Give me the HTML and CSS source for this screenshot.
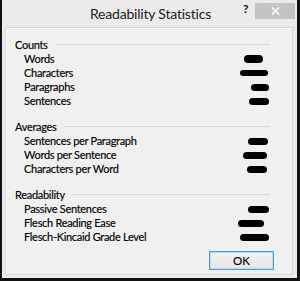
FILE: index.html
```html
<!DOCTYPE html>
<html>
<head>
<meta charset="utf-8">
<link rel="stylesheet" href="styles.css">
</head>
<body>
<div class="frame">
  <div class="window">
    <div class="titlebar">
      <div class="title">Readability Statistics</div>
      <div class="help">?</div>
      <div class="close">
        <svg width="9" height="8" viewBox="0 0 9 8"><path d="M1 0.5 L8 7.5 M8 0.5 L1 7.5" stroke="#fff" stroke-width="1.6"/></svg>
      </div>
    </div>
    <div class="panel">
      <div class="group">
        <div class="ghead"><span>Counts</span></div>
        <div class="row"><span>Words</span><i class="blob" style="width:19px;height:8px;margin-right:6px"></i></div>
        <div class="row"><span>Characters</span><i class="blob" style="width:28px;height:6px;margin-right:1px"></i></div>
        <div class="row"><span>Paragraphs</span><i class="blob" style="width:18px;height:7px;margin-right:0"></i></div>
        <div class="row"><span>Sentences</span><i class="blob" style="width:20px;height:7px;margin-right:0"></i></div>
      </div>
      <div class="group">
        <div class="ghead"><span>Averages</span></div>
        <div class="row"><span>Sentences per Paragraph</span><i class="blob" style="width:20px;height:7px;margin-right:1px"></i></div>
        <div class="row"><span>Words per Sentence</span><i class="blob" style="width:24px;height:7px;margin-right:2px"></i></div>
        <div class="row"><span>Characters per Word</span><i class="blob" style="width:20px;height:7px;margin-right:2px"></i></div>
      </div>
      <div class="group">
        <div class="ghead"><span>Readability</span></div>
        <div class="row"><span>Passive Sentences</span><i class="blob" style="width:21px;height:7px;margin-right:0"></i></div>
        <div class="row"><span>Flesch Reading Ease</span><i class="blob" style="width:26px;height:7px;margin-right:5px"></i></div>
        <div class="row"><span>Flesch-Kincaid Grade Level</span><i class="blob" style="width:29px;height:7px;margin-right:0"></i></div>
      </div>
      <div class="actions">
        <button class="ok">OK</button>
      </div>
    </div>
  </div>
</div>
</body>
</html>
```
FILE: styles.css
```css
html, body {
  margin: 0;
  padding: 0;
}
body {
  width: 300px;
  height: 281px;
  overflow: hidden;
  font-family: Lato, "Open Sans", sans-serif;
}
.frame {
  width: 300px;
  height: 281px;
  box-sizing: border-box;
  background: #111;
  padding: 0 3px 3px 2px;
}
.window {
  height: 278px;
  background: #ebebeb;
  display: flex;
  flex-direction: column;
}
.titlebar {
  height: 27px;
  position: relative;
  flex: none;
}
.title {
  text-align: center;
  font-size: 14px;
  letter-spacing: -0.2px;
  line-height: 27px;
  color: #222;
  padding-left: 2px;
}
.help {
  position: absolute;
  left: 241px;
  top: 2px;
  font-size: 12px;
  font-weight: bold;
  color: #111;
  line-height: 14px;
}
.close {
  position: absolute;
  left: 253px;
  top: 3px;
  width: 40px;
  height: 16px;
  background: #c4c4c4;
  display: flex;
  align-items: center;
  justify-content: center;
}
.panel {
  flex: 1;
  margin: 0 4px 3px 3px;
  background: #f0f0f0;
  border: 1px solid #d9d9d9;
  box-shadow: inset 1px 1px 0 #fafafa;
  padding: 10px 23px 0 9px;
  display: flex;
  flex-direction: column;
  gap: 12px;
  font-size: 11px;
  letter-spacing: -0.3px;
  color: #000;
  -webkit-text-stroke: 0.15px #000;
}
.group {
  display: flex;
  flex-direction: column;
}
.ghead {
  height: 14px;
  line-height: 14px;
  display: flex;
  align-items: center;
  margin-right: -1px;
}
.ghead::after {
  content: "";
  flex: 1;
  height: 1px;
  background: #d8d8d8;
  margin-left: 7px;
  margin-top: -1px;
}
.row {
  height: 14px;
  line-height: 14px;
  padding-left: 9px;
  display: flex;
  align-items: center;
  justify-content: space-between;
}
.blob {
  display: block;
  background: #000;
  border-radius: 4px;
}
.actions {
  display: flex;
  justify-content: flex-end;
  margin-top: -5px;
  padding-right: 0;
  margin-right: -5px;
}
.ok {
  width: 65px;
  height: 19px;
  box-sizing: border-box;
  border: 1px solid #4a9be8;
  box-shadow: inset 0 0 0 1px #b5d7f8;
  background: linear-gradient(#f2f2f2, #e6e6e6);
  font-family: Lato, "Open Sans", sans-serif;
  font-size: 11.5px;
  color: #000;
  padding: 0;
  line-height: 17px;
}
```
